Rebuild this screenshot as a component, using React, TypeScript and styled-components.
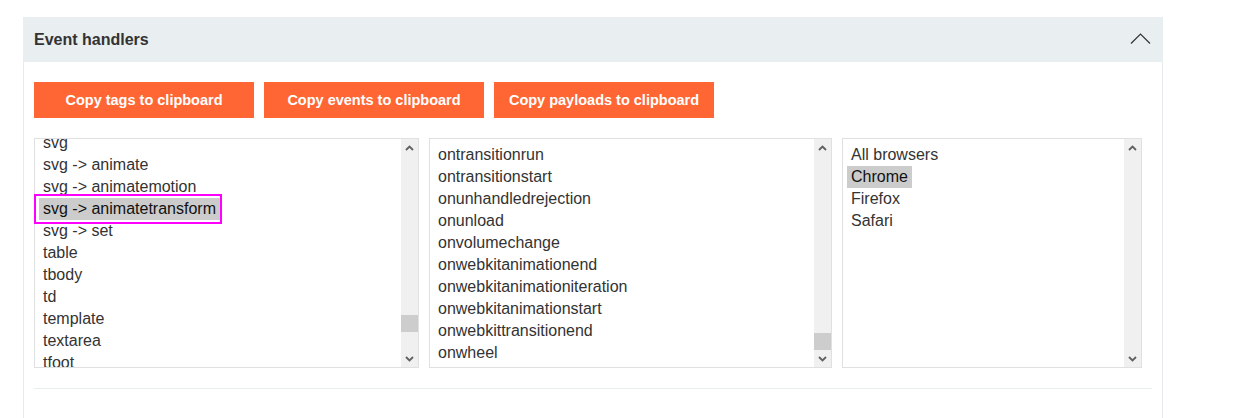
import React from "react";
import styled, { createGlobalStyle } from "styled-components";

const GlobalStyle = createGlobalStyle`
  html, body { margin: 0; padding: 0; background: #ffffff; }
  body { font-family: "Liberation Sans", Arial, sans-serif; color: #333333; }
  * { box-sizing: border-box; }
`;

const Page = styled.div`
  padding: 17px 70px 0 23px;
`;

const Panel = styled.section`
  width: 1140px;
  border: 1px solid #e6eaed;
  border-top: none;
  border-bottom: none;
`;

const Header = styled.header`
  height: 45px;
  margin: 0 -1px;
  background: #e9eef1;
  display: flex;
  align-items: center;
  justify-content: space-between;
  padding: 1px 12px 0 11px;
`;

const Title = styled.h2`
  margin: 0;
  font-size: 16px;
  font-weight: 700;
  color: #333333;
`;

const ChevronWrap = styled.span`
  display: flex;
  margin-top: -4px;
`;

const Body = styled.div`
  padding: 20px 10px 30px 10px;
  display: flex;
  flex-direction: column;
`;

const ButtonRow = styled.div`
  display: flex;
  gap: 10px;
`;

const ActionButton = styled.button`
  width: 220px;
  height: 36px;
  border: none;
  background: #ff6633;
  color: #ffffff;
  font-family: "Liberation Sans", Arial, sans-serif;
  font-size: 14.5px;
  font-weight: 700;
  padding: 0;
  cursor: pointer;
`;

const ListsRow = styled.div`
  display: flex;
  gap: 10px;
  margin-top: 20px;
`;

const ListBox = styled.div<{ $w: number }>`
  width: ${(p) => p.$w}px;
  height: 230px;
  border: 1px solid #e0e0e0;
  display: flex;
  background: #ffffff;
`;

const Viewport = styled.div`
  flex: 1;
  min-width: 0;
  clip-path: inset(0 0 0 -2px);
`;

const Content = styled.div<{ $offset: number }>`
  padding: 5px 4px 4px 4px;
  margin-top: ${(p) => -p.$offset}px;
`;

const Option = styled.div`
  height: 22px;
  line-height: 22px;
  font-size: 16px;
  color: #333333;
  white-space: nowrap;
`;

const OptionLabel = styled.span<{ $selected?: boolean; $marked?: boolean }>`
  display: inline-block;
  position: relative;
  padding: 0 4px;
  height: 22px;
  background: ${(p) => (p.$selected ? "#cccccc" : "transparent")};
  color: ${(p) => (p.$selected ? "#111111" : "#333333")};
  ${(p) =>
    p.$marked
      ? `&::after {
    content: "";
    position: absolute;
    top: -4px;
    left: -5px;
    right: -2px;
    bottom: -4px;
    border: 2px solid #ff00ff;
  }`
      : ""}
`;

const ScrollBar = styled.div`
  width: 17px;
  background: #f0f0f0;
  display: flex;
  flex-direction: column;
`;

const ArrowButton = styled.div`
  height: 17px;
  display: flex;
  align-items: center;
  justify-content: center;
`;

const Track = styled.div`
  flex: 1;
`;

const Thumb = styled.div<{ $top: number }>`
  margin-top: ${(p) => p.$top}px;
  height: 17px;
  background: #cdcdcd;
`;

const Divider = styled.hr`
  margin: 20px 0 0 0;
  border: none;
  border-top: 1px solid #e8eded;
  height: 0;
`;

const Arrow = ({ up }: { up?: boolean }) => (
  <svg width="9" height="6" viewBox="0 0 9 6">
    <path
      d={up ? "M1 5 L4.5 1.5 L8 5" : "M1 1 L4.5 4.5 L8 1"}
      fill="none"
      stroke="#606060"
      strokeWidth="1.8"
    />
  </svg>
);

const Chevron = () => (
  <svg width="21" height="11" viewBox="0 0 21 11">
    <path d="M1 10.5 L10.5 1 L20 10.5" fill="none" stroke="#333333" strokeWidth="1.2" />
  </svg>
);

type Item = { label: string; selected?: boolean; marked?: boolean };

const SelectList = ({
  width,
  items,
  offset,
  thumbTop,
}: {
  width: number;
  items: Item[];
  offset: number;
  thumbTop?: number;
}) => (
  <ListBox $w={width}>
    <Viewport>
      <Content $offset={offset}>
        {items.map((it) => (
          <Option key={it.label}>
            <OptionLabel $selected={it.selected} $marked={it.marked}>
              {it.label}
            </OptionLabel>
          </Option>
        ))}
      </Content>
    </Viewport>
    <ScrollBar>
      <ArrowButton>
        <Arrow up />
      </ArrowButton>
      <Track>{thumbTop !== undefined && <Thumb $top={thumbTop} />}</Track>
      <ArrowButton>
        <Arrow />
      </ArrowButton>
    </ScrollBar>
  </ListBox>
);

const tags: Item[] = [
  { label: "svg" },
  { label: "svg -> animate" },
  { label: "svg -> animatemotion" },
  { label: "svg -> animatetransform", selected: true, marked: true },
  { label: "svg -> set" },
  { label: "table" },
  { label: "tbody" },
  { label: "td" },
  { label: "template" },
  { label: "textarea" },
  { label: "tfoot" },
];

const events: Item[] = [
  { label: "ontransitionrun" },
  { label: "ontransitionstart" },
  { label: "onunhandledrejection" },
  { label: "onunload" },
  { label: "onvolumechange" },
  { label: "onwebkitanimationend" },
  { label: "onwebkitanimationiteration" },
  { label: "onwebkitanimationstart" },
  { label: "onwebkittransitionend" },
  { label: "onwheel" },
];

const browsers: Item[] = [
  { label: "All browsers" },
  { label: "Chrome", selected: true },
  { label: "Firefox" },
  { label: "Safari" },
];

export default function App() {
  return (
    <>
      <GlobalStyle />
      <Page>
        <Panel>
          <Header>
            <Title>Event handlers</Title>
            <ChevronWrap>
              <Chevron />
            </ChevronWrap>
          </Header>
          <Body>
            <ButtonRow>
              <ActionButton>Copy tags to clipboard</ActionButton>
              <ActionButton>Copy events to clipboard</ActionButton>
              <ActionButton>Copy payloads to clipboard</ActionButton>
            </ButtonRow>
            <ListsRow>
              <SelectList width={385} items={tags} offset={12} thumbTop={159} />
              <SelectList width={403} items={events} offset={0} thumbTop={177} />
              <SelectList width={300} items={browsers} offset={0} />
            </ListsRow>
            <Divider />
          </Body>
        </Panel>
      </Page>
    </>
  );
}
